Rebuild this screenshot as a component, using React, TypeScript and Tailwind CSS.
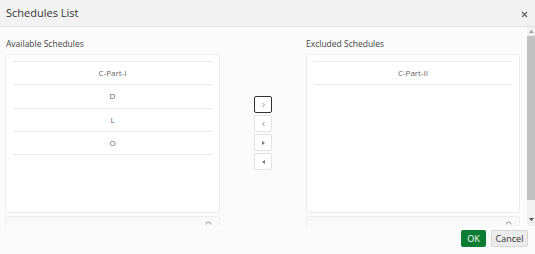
import React from 'react';

const available = ['C-Part-I', 'D', 'L', 'O'];
const excluded = ['C-Part-II'];

function ListBox({ items }: { items: string[] }) {
  return (
    <div className="flex flex-col shrink-0">
      <div className="h-[159px] shrink-0 bg-white border border-[#ececec] rounded-[2px] px-[7px] pt-[6px]">
        <div className="border-t border-[#e8e8e8]">
          {items.map((item) => (
            <div
              key={item}
              className="h-[23.3px] border-b border-[#e8e8e8] flex items-center justify-center text-[8px] text-[#666]"
            >
              {item}
            </div>
          ))}
        </div>
      </div>
      {/* filter box, cut off by the scroll area */}
      <div className="mt-[3px] h-[14px] shrink-0 bg-[#f9f9f9] border border-[#ececec] rounded-[2px] flex justify-end pr-[7px] pt-[3px]">
        <svg width="7" height="5" viewBox="0 0 7 5">
          <path d="M1 4.5 A2.5 2.5 0 0 1 6 4.5" fill="none" stroke="#999" strokeWidth="1" />
        </svg>
      </div>
    </div>
  );
}

function ShuttleButton({ focused, children }: { focused?: boolean; children: React.ReactNode }) {
  return (
    <div
      className={`w-[18px] h-[17px] shrink-0 flex items-center justify-center rounded-[2px] bg-white ${
        focused ? 'border border-[#333]' : 'border border-[#e2e2e2]'
      }`}
    >
      {children}
    </div>
  );
}

export default function App() {
  return (
    <div
      className="w-[535px] h-[254px] bg-[#fbfbfb] flex flex-col overflow-hidden"
      style={{ fontFamily: '"Open Sans", "Noto Sans", sans-serif' }}
    >
      {/* Header */}
      <div className="h-[27px] shrink-0 bg-[#f2f2f2] border-b border-[#e3e3e3] flex items-center justify-between pl-[6px] pr-[6px]">
        <span className="text-[11px] text-[#333]">Schedules List</span>
        <svg width="7" height="7" viewBox="0 0 7 7" className="mt-[2px] mr-[1px]">
          <path d="M1 1 L6 6 M6 1 L1 6" stroke="#666" strokeWidth="1.3" />
        </svg>
      </div>

      {/* Body */}
      <div className="h-[199px] shrink-0 flex">
        <div className="flex-1 overflow-hidden flex pl-[5px] pr-[7px] pt-[10px]">
          <div className="w-[215px] flex flex-col">
            <span className="text-[8.5px] leading-[14px] text-[#444] pl-[1px] h-[17px] shrink-0">Available Schedules</span>
            <ListBox items={available} />
          </div>
          <div className="flex-1 flex flex-col items-center pt-[59px] gap-[2px]">
            <ShuttleButton focused>
              <svg width="5" height="6" viewBox="0 0 5 6">
                <path d="M1.5 1 L3.5 3 L1.5 5" fill="none" stroke="#888" strokeWidth="0.9" />
              </svg>
            </ShuttleButton>
            <ShuttleButton>
              <svg width="5" height="6" viewBox="0 0 5 6">
                <path d="M3.5 1 L1.5 3 L3.5 5" fill="none" stroke="#888" strokeWidth="0.9" />
              </svg>
            </ShuttleButton>
            <ShuttleButton>
              <svg width="5" height="6" viewBox="0 0 5 6">
                <path d="M1 1 L4 3 L1 5 Z" fill="#777" />
              </svg>
            </ShuttleButton>
            <ShuttleButton>
              <svg width="5" height="6" viewBox="0 0 5 6">
                <path d="M4 1 L1 3 L4 5 Z" fill="#777" />
              </svg>
            </ShuttleButton>
          </div>
          <div className="w-[214px] flex flex-col">
            <span className="text-[8.5px] leading-[14px] text-[#444] h-[17px] shrink-0">Excluded Schedules</span>
            <ListBox items={excluded} />
          </div>
        </div>
        {/* scrollbar */}
        <div className="w-[8px] bg-[#f1f1f1] flex flex-col items-center">
          <div className="h-[9px] flex items-center justify-center">
            <svg width="5" height="3" viewBox="0 0 5 3">
              <path d="M0 3 L2.5 0 L5 3 Z" fill="#a3a3a3" />
            </svg>
          </div>
          <div className="w-full h-[164px] bg-[#c1c1c1]" />
          <div className="flex-1 flex items-end justify-center pb-[5px]">
            <svg width="5" height="3" viewBox="0 0 5 3">
              <path d="M0 0 L2.5 3 L5 0 Z" fill="#505050" />
            </svg>
          </div>
        </div>
      </div>

      {/* Footer */}
      <div className="flex-1 flex items-start justify-end gap-[5px] pt-[4px] pr-[7px]">
        <button className="w-[25px] h-[17px] bg-[#0a7d32] text-white text-[9px] rounded-[2px] flex items-center justify-center">
          OK
        </button>
        <button className="w-[37px] h-[17px] bg-[#ececec] border border-[#d6d6d6] text-[#333] text-[9px] rounded-[2px] flex items-center justify-center">
          Cancel
        </button>
      </div>
    </div>
  );
}
